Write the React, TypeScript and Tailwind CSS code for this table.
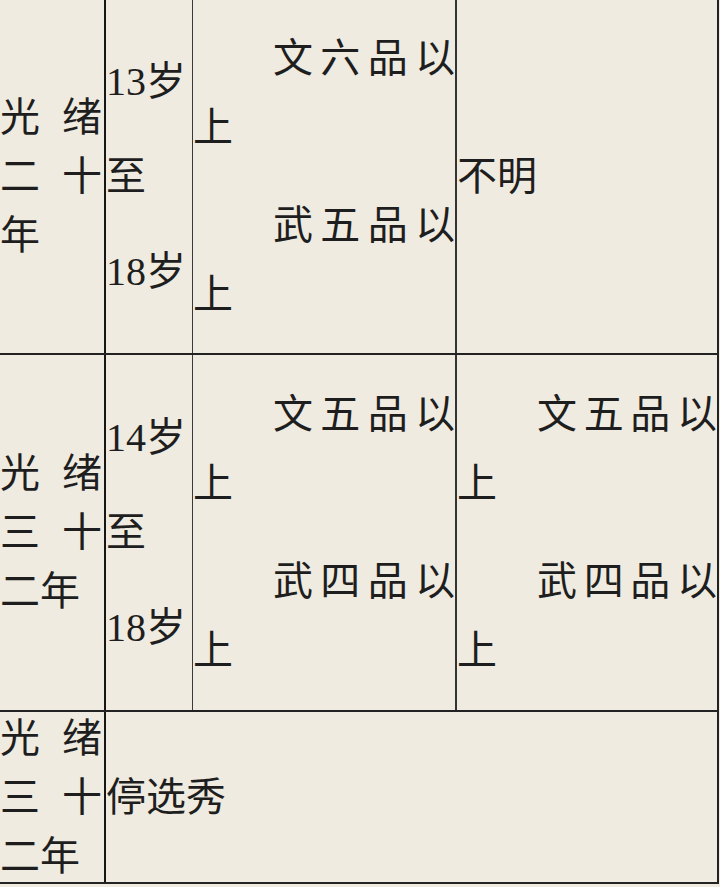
import React from "react";

const Chars = ({ t }: { t: string }) => (
  <div className="flex justify-between pl-[80px] h-[69px] leading-[69px]">
    {t.split("").map((c, i) => (
      <span key={i}>{c}</span>
    ))}
  </div>
);

const Para = ({ t }: { t: string }) => (
  <div>
    <Chars t={t} />
    <div className="h-[69px] leading-[69px]">上</div>
  </div>
);

const Pair = ({ a, b }: { a: string; b: string }) => (
  <div className="flex justify-between h-[59px] leading-[59px]">
    <span>{a}</span>
    <span>{b}</span>
  </div>
);

const Ages = ({ from }: { from: string }) => (
  <div className="flex flex-col justify-center">
    <div className="h-[95px] leading-[95px] whitespace-nowrap">{from}岁</div>
    <div className="h-[95px] leading-[95px]">至</div>
    <div className="h-[95px] leading-[95px] whitespace-nowrap">18岁</div>
  </div>
);

export default function App() {
  return (
    <div className="w-[720px] h-[887px] bg-[#efebe0] overflow-hidden text-[40px] text-[#1e1e1e] font-['Liberation_Serif','Noto_Sans_CJK_SC',serif]">
      {/* Row 1 */}
      <div className="flex h-[355px] w-[719px] border-b-2 border-[#222]">
        <div className="w-[106px] shrink-0 border-r-2 border-[#161616] flex flex-col justify-center pr-[2px]">
          <Pair a="光" b="绪" />
          <Pair a="二" b="十" />
          <div className="h-[59px] leading-[59px]">年</div>
        </div>
        <div className="w-[87px] shrink-0 border-r border-[#3a3a3a] flex flex-col justify-center">
          <Ages from="13" />
        </div>
        <div className="w-[264px] shrink-0 border-r-2 border-[#333] flex flex-col justify-center gap-[29px]">
          <Para t="文六品以" />
          <Para t="武五品以" />
        </div>
        <div className="w-[262px] shrink-0 border-r-2 border-[#222] flex flex-col justify-center">
          <div className="h-[59px] leading-[59px]">不明</div>
        </div>
      </div>
      {/* Row 2 */}
      <div className="flex h-[357px] w-[719px] border-b-2 border-[#222]">
        <div className="w-[106px] shrink-0 border-r-2 border-[#161616] flex flex-col justify-center pr-[2px]">
          <Pair a="光" b="绪" />
          <Pair a="三" b="十" />
          <div className="h-[59px] leading-[59px]">二年</div>
        </div>
        <div className="w-[87px] shrink-0 border-r border-[#3a3a3a] flex flex-col justify-center">
          <Ages from="14" />
        </div>
        <div className="w-[264px] shrink-0 border-r-2 border-[#333] flex flex-col justify-center gap-[29px]">
          <Para t="文五品以" />
          <Para t="武四品以" />
        </div>
        <div className="w-[262px] shrink-0 border-r-2 border-[#222] flex flex-col justify-center gap-[29px]">
          <Para t="文五品以" />
          <Para t="武四品以" />
        </div>
      </div>
      {/* Row 3 */}
      <div className="flex h-[172px] w-[719px] border-b-2 border-[#222]">
        <div className="w-[106px] shrink-0 border-r-2 border-[#161616] flex flex-col justify-center pr-[2px]">
          <Pair a="光" b="绪" />
          <Pair a="三" b="十" />
          <div className="h-[59px] leading-[59px]">二年</div>
        </div>
        <div className="flex-1 border-r-2 border-[#222] flex flex-col justify-center">
          <div className="h-[59px] leading-[59px]">停选秀</div>
        </div>
      </div>
    </div>
  );
}
